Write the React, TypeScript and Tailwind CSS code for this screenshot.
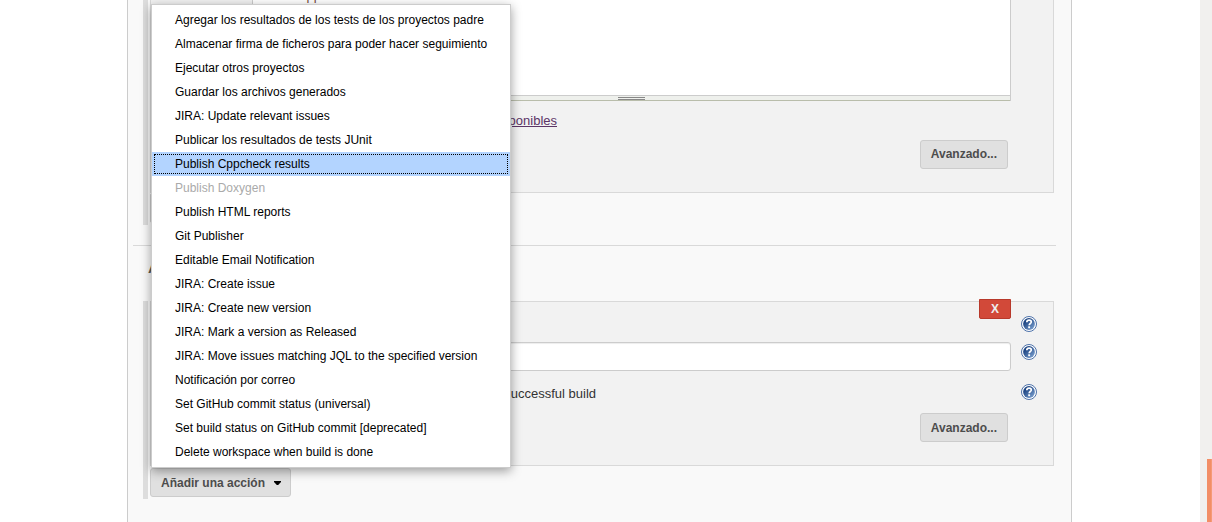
import React from "react";

type Item = { label: string; state?: "selected" | "disabled" };

const items: Item[] = [
  { label: "Agregar los resultados de los tests de los proyectos padre" },
  { label: "Almacenar firma de ficheros para poder hacer seguimiento" },
  { label: "Ejecutar otros proyectos" },
  { label: "Guardar los archivos generados" },
  { label: "JIRA: Update relevant issues" },
  { label: "Publicar los resultados de tests JUnit" },
  { label: "Publish Cppcheck results", state: "selected" },
  { label: "Publish Doxygen", state: "disabled" },
  { label: "Publish HTML reports" },
  { label: "Git Publisher" },
  { label: "Editable Email Notification" },
  { label: "JIRA: Create issue" },
  { label: "JIRA: Create new version" },
  { label: "JIRA: Mark a version as Released" },
  { label: "JIRA: Move issues matching JQL to the specified version" },
  { label: "Notificación por correo" },
  { label: "Set GitHub commit status (universal)" },
  { label: "Set build status on GitHub commit [deprecated]" },
  { label: "Delete workspace when build is done" },
];

function HelpIcon() {
  return (
    <svg width="16" height="16" viewBox="0 0 16 16" className="block" role="img" aria-label="Ayuda">
      <defs>
        <linearGradient id="help" x1="0" y1="0" x2="1" y2="1">
          <stop offset="0.25" stopColor="#1f4684" />
          <stop offset="1" stopColor="#86abd8" />
        </linearGradient>
      </defs>
      <circle cx="8" cy="8" r="7.5" fill="#fff" stroke="#3a62a0" strokeWidth="0.9" />
      <circle cx="8" cy="8" r="5.9" fill="url(#help)" />
      <path d="M5.8 6.3C5.8 4.8 6.8 4.1 8.1 4.1s2.2.8 2.2 1.9c0 1.5-2.1 1.6-2.1 3.3" fill="none" stroke="#fff" strokeWidth="1.7" />
      <rect x="7.2" y="10.3" width="1.9" height="1.9" fill="#fff" />
    </svg>
  );
}

function Button({ children, className = "" }: { children: React.ReactNode; className?: string }) {
  return (
    <button
      className={`flex h-[29px] items-center rounded-[3px] border border-[#ccc] bg-[#e0e0e0] px-[10px] text-[12px] font-bold whitespace-nowrap text-[#4d4d4d] ${className}`}
    >
      {children}
    </button>
  );
}

function Menu() {
  return (
    <ul className="absolute top-[4px] left-[151px] z-10 w-[360px] border border-[#ccc] bg-white py-[3px] text-[12px] text-black shadow-[0_3px_10px_rgba(0,0,0,0.38)]">
      {items.map(({ label, state }) => (
        <li
          key={label}
          className={`relative h-[24px] pl-[23px] leading-[24px] whitespace-nowrap ${
            state === "selected" ? "bg-[#b3d4ff]" : state === "disabled" ? "text-[#aaa]" : ""
          }`}
        >
          {label}
          {state === "selected" && (
            <span className="absolute top-[2px] right-[2px] bottom-[2px] left-[2px] border border-dotted border-black" />
          )}
        </li>
      ))}
    </ul>
  );
}

export default function App() {
  return (
    <div className="relative flex h-[522px] w-[1212px] justify-between overflow-hidden bg-white font-['Liberation_Sans',Arial,sans-serif] text-[13px] text-[#333]">
      <main className="ml-[127px] flex w-[945px] flex-col border-x border-[#ccc] bg-[#f9f9f9] pl-[5px]">
        <section className="flex h-[225px] pl-[10px]">
          <div className="w-[5px] bg-[#ddd]" />
          <div className="ml-[2px] flex w-[904px] flex-col">
            <div className="flex h-[193px] flex-col border-x border-b border-[#d9d9d9] bg-[#f2f2f2]">
              <div className="ml-[101px] flex h-[101px] w-[759px] flex-col border-x border-[#ccc] bg-white">
                <div className="-mt-[12px] h-[107px] pl-[16px] leading-[15px] text-[#7a4a3a]">build/cpp.xml</div>
                <div className="flex h-[6px] flex-col items-center border-y border-t-[#ccc] border-b-[#b9bdab] bg-[#eef0ec] pt-px">
                  <div className="mr-[1px] h-[3px] w-[27px] border-y border-[#888]" />
                </div>
              </div>
              <a className="mt-[12px] ml-[296px] w-[110px] text-right leading-[16px] whitespace-nowrap text-[#5c3566] underline">
                disponibles
              </a>
              <Button className="mt-[11px] mr-[45px] self-end pb-px">Avanzado...</Button>
            </div>
            <div className="h-[30px] w-[140px] rounded-[2px] border border-[#ccc] bg-[#e0e0e0]" />
          </div>
        </section>

        <hr className="mt-[20px] h-px w-[923px] border-0 bg-[#d9d9d9]" />
        <h2 className="mt-[13px] ml-[15px] h-[42px] text-[15px] leading-[17px] font-bold text-[#5c5c50]">Acciones para ejecutar después.</h2>

        <section className="flex h-[198px] pl-[10px]">
          <div className="w-[5px] bg-[#ddd]" />
          <div className="ml-[2px] flex w-[904px] flex-col items-start">
            <div className="flex h-[165px] w-[904px] border border-[#d9d9d9] bg-[#f2f2f2]">
              <div className="flex w-[860px] flex-col">
                <button className="-mt-[3px] h-[20px] w-[32px] self-end rounded-b-[2px] border border-[#b8392b] bg-[#d24939] text-[12px] leading-[18px] font-bold text-[#eee]">
                  X
                </button>
                <input className="mt-[23px] ml-[101px] h-[29px] rounded-[3px] border border-[#ccc] bg-white shadow-[inset_0_1px_1px_rgba(0,0,0,0.075)]" />
                <div className="mt-[15px] w-[445px] text-right leading-[15px] whitespace-nowrap">Trigger only on successful build</div>
                <Button className="mt-[12px] mr-[3px] self-end pt-px">Avanzado...</Button>
              </div>
              <div className="ml-[10px] flex flex-col pt-[14px]">
                <HelpIcon />
                <div className="mt-[12px]"><HelpIcon /></div>
                <div className="mt-[24px]"><HelpIcon /></div>
              </div>
            </div>
            <Button className="mt-[2px] w-[141px] gap-[9px] pt-px">
              Añadir una acción
              <svg width="7" height="4" viewBox="0 0 7 4" className="shrink-0"><path d="M0 0H7V1L4.2 4H2.8L0 1Z" fill="#000" /></svg>
            </Button>
          </div>
        </section>
      </main>

      <aside className="flex w-[12px] flex-col items-end bg-[#f1f0ee]">
        <div className="mt-[459px] h-[63px] w-[5px] border-r border-[#f59a77] bg-[#f28e66]" />
      </aside>

      <Menu />
    </div>
  );
}
